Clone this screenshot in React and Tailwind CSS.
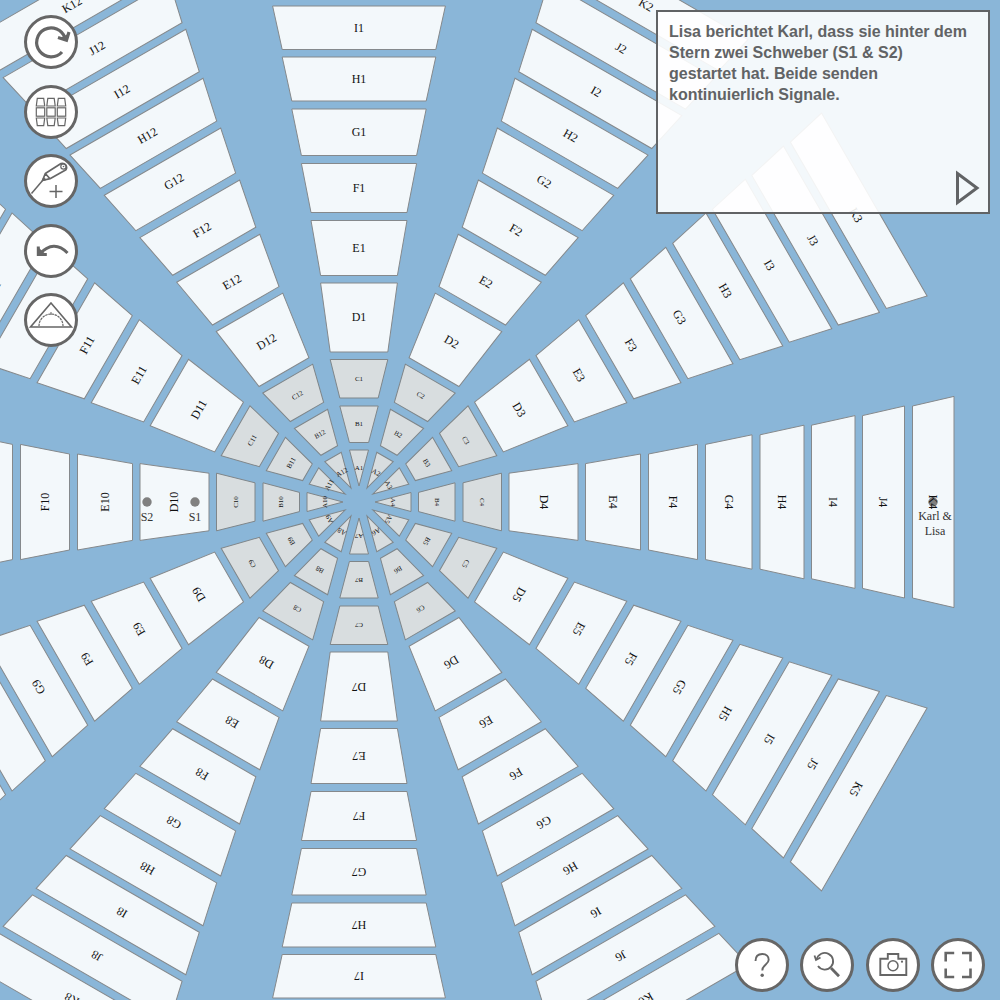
import React from "react";

const SIZE = 1000;
const CENTER = { x: 359, y: 502 };

// inner / outer distance from the star, half widths at both ends, label distance
const RINGS = [
  { name: "A", inner: 16, outer: 52, innerHalf: 0, outerHalf: 9.5, label: 34, near: true },
  { name: "B", inner: 59.5, outer: 96, innerHalf: 9.6, outerHalf: 19.2, label: 78, near: true },
  { name: "C", inner: 104, outer: 142.5, innerHalf: 19.2, outerHalf: 28.8, label: 123, near: true },
  { name: "D", inner: 150, outer: 219, innerHalf: 28.8, outerHalf: 38.4, label: 185 },
  { name: "E", inner: 226.5, outer: 281.5, innerHalf: 38.4, outerHalf: 48, label: 254 },
  { name: "F", inner: 289.5, outer: 338.5, innerHalf: 48, outerHalf: 57.6, label: 314 },
  { name: "G", inner: 346.5, outer: 393, innerHalf: 57.6, outerHalf: 67.2, label: 370 },
  { name: "H", inner: 401, outer: 445, innerHalf: 67.2, outerHalf: 76.8, label: 423 },
  { name: "I", inner: 452.5, outer: 496, innerHalf: 76.8, outerHalf: 86.4, label: 474 },
  { name: "J", inner: 503.5, outer: 545.5, innerHalf: 86.4, outerHalf: 96, label: 524 },
  { name: "K", inner: 553.5, outer: 595, innerHalf: 96, outerHalf: 105.6, label: 574 },
];

const SECTORS = Array.from({ length: 12 }, (_, i) => i + 1);

const DOTS = [
  { x: 147, labelX: 147, lines: ["S2"] },
  { x: 195, labelX: 195, lines: ["S1"] },
  { x: 933, labelX: 935, lines: ["Karl &", "Lisa"] },
];

function sectorTransform(number) {
  return `translate(${CENTER.x} ${CENTER.y}) rotate(${(number - 1) * 30})`;
}

// labels whose middle lies beyond the map's edge are left out
function isLabelOnMap(ring, number) {
  const angle = ((number - 1) * Math.PI) / 6;
  const x = CENTER.x + ring.label * Math.sin(angle);
  const y = CENTER.y - ring.label * Math.cos(angle);
  const margin = 9;
  return x > -margin && x < SIZE + margin && y > -margin && y < SIZE + margin;
}

function SectorFields({ number }) {
  return (
    <g transform={sectorTransform(number)}>
      {RINGS.map((r) => (
        <polygon
          key={r.name}
          points={`${-r.outerHalf},${-r.outer} ${r.outerHalf},${-r.outer} ${r.innerHalf},${-r.inner} ${-r.innerHalf},${-r.inner}`}
          className={r.near ? "fill-[#d8dddf] stroke-[#7f868a]" : "fill-[#f3f8fb] stroke-[#85898c]"}
        />
      ))}
    </g>
  );
}

function SectorLabels({ number }) {
  return (
    <g transform={sectorTransform(number)} textAnchor="middle" className="fill-[#111111]">
      {RINGS.filter((r) => isLabelOnMap(r, number)).map((r) => (
        <text key={r.name} y={-r.label} dy={r.near ? 2 : 4} className={r.near ? "text-[7px]" : "text-xs"}>
          {r.name + number}
        </text>
      ))}
    </g>
  );
}

function StarMap() {
  return (
    <svg
      viewBox="0 0 1000 1000"
      preserveAspectRatio="xMidYMid slice"
      className="block h-full w-full font-['Liberation_Serif',serif]"
      role="img"
      aria-label="Sternkarte"
    >
      {SECTORS.map((n) => (
        <SectorFields key={n} number={n} />
      ))}
      {DOTS.map((d) => (
        <g key={d.x}>
          <circle cx={d.x} cy="502" r="4.7" className="fill-[#808080]" />
          {d.lines.map((line, i) => (
            <text
              key={line}
              x={d.labelX}
              y={(d.lines.length > 1 ? 520 : 521) + i * 15}
              textAnchor="middle"
              className="fill-[#333333] text-xs"
            >
              {line}
            </text>
          ))}
        </g>
      ))}
      {SECTORS.map((n) => (
        <SectorLabels key={n} number={n} />
      ))}
    </svg>
  );
}

function RoundButton({ label, children }) {
  return (
    <button
      type="button"
      aria-label={label}
      className="flex size-[54px] shrink-0 items-center justify-center rounded-full border-[3px] border-[#666666] bg-white text-[#666666]"
    >
      <svg viewBox="-24 -24 48 48" className="size-12" fill="none" stroke="currentColor">
        {children}
      </svg>
    </button>
  );
}

const GRID_COLUMNS = [-10.5, 0, 10.5];

export default function App() {
  return (
    <main className="relative h-screen w-full overflow-hidden bg-[#8ab6d8]">
      <StarMap />

      <nav
        aria-label="Werkzeuge"
        className="absolute top-[15px] left-6 flex h-[332px] flex-col justify-between"
      >
        <RoundButton label="Drehen">
          <path d="M11 10 A14.500 14.500 0 1 1 14 -4" strokeWidth="3.200" />
          <path d="M7 -4.500 L15.500 -1.800 L18 -10" strokeWidth="3.200" />
          <path d="M9 -4 L15.500 -2 L17 -8 Z" fill="currentColor" stroke="none" />
        </RoundButton>
        <RoundButton label="Felder">
          {GRID_COLUMNS.map((x) => (
            <g key={x} strokeWidth="1.200">
              <path d={`M${x - 3.2} -13.700 h6.400 l1 7.700 h-8.400 z`} />
              <rect x={x - 4.2} y="-4.200" width="8.400" height="8.400" />
              <path d={`M${x - 4.2} 6 h8.400 l-1 7.700 h-6.400 z`} />
            </g>
          ))}
        </RoundButton>
        <RoundButton label="Zeichnen">
          <path d="M-19.500 12.500 L-8 -1" strokeWidth="1.500" />
          <path
            d="M-8.500 -0.500 L-5.700 -7.500 L10 -17.500 A4.300 4.300 0 0 1 15 -11.300 L-1 -2.300 Z M-5.700 -7.500 L-1 -2.300"
            strokeWidth="1.700"
            strokeLinejoin="round"
          />
          <path d="M-8.500 -0.500 L-7.400 -3.700 L-5 -1.300 Z" fill="currentColor" />
          <circle cx="12.500" cy="-14.500" r="2.700" strokeWidth="1.200" />
          <circle cx="12.500" cy="-14.500" r="0.800" fill="currentColor" stroke="none" />
          <path d="M5 4 v13 M-1.500 10.500 h13" strokeWidth="1.500" />
        </RoundButton>
        <RoundButton label="Zurück">
          <path d="M-11.500 3 Q3 -12 16.500 2" strokeWidth="3" />
          <path d="M-12.700 -4.500 v8 h8.500" strokeWidth="3" />
          <path d="M-12 -3 L-12 3 L-5.500 3 Z" fill="currentColor" stroke="none" />
        </RoundButton>
        <RoundButton label="Geodreieck">
          <path d="M0 -17 L20.500 7 H-20.500 Z" strokeWidth="1.600" />
          <path d="M-12 6 A12 12 0 0 1 12 6" strokeWidth="1.200" strokeDasharray="2.500 0.700" />
          <path d="M0 -8 v3" strokeWidth="1" />
        </RoundButton>
      </nav>

      <section
        aria-label="Hinweis"
        className="absolute top-[10px] right-[10px] flex min-h-[204px] w-[334px] flex-col justify-between border-2 border-[#616365] bg-white/90 pt-[9px] pr-2 pb-[6px] pl-[11px]"
      >
        <p className="pr-3 font-['Liberation_Sans',sans-serif] text-base leading-[21px] font-bold text-[#616365]">
          Lisa berichtet Karl, dass sie hinter dem Stern zwei Schweber (S1 &amp; S2) gestartet hat.
          Beide senden kontinuierlich Signale.
        </p>
        <button type="button" aria-label="Weiter" className="self-end text-[#616365]">
          <svg width="24" height="36" viewBox="0 0 24 36" fill="none" stroke="currentColor" strokeWidth="3">
            <path d="M1.500 3.500 L21 18 L1.500 32.500 Z" />
          </svg>
        </button>
      </section>

      <div
        role="toolbar"
        aria-label="Ansicht"
        className="absolute right-[15px] bottom-2 flex w-[250px] justify-between"
      >
        <RoundButton label="Hilfe">
          <path
            d="M-6.500 -4 C-6.500 -8.500 -4 -11 0.300 -11 C4.500 -11 6.700 -8.500 6.700 -5.300 C6.700 -0.500 0.300 -0.500 0.300 5.500"
            strokeWidth="1.900"
          />
          <circle cx="0.200" cy="10.300" r="1.700" fill="currentColor" stroke="none" />
        </RoundButton>
        <RoundButton label="Zoom zurücksetzen">
          <path d="M-10.300 -5.500 A8.300 8.300 0 1 1 -9 1" strokeWidth="1.800" />
          <path d="M-12.500 -9.500 L-11 -5 L-6.500 -7.500" strokeWidth="1.800" />
          <path d="M4 3 L12 11.300" strokeWidth="2.800" />
        </RoundButton>
        <RoundButton label="Foto">
          <path d="M-12.700 -6.300 h7.500 v-4.700 h10.500 v4.700 h8 v16.300 h-26 z" strokeWidth="1.900" />
          <circle cx="0" cy="0.700" r="5" strokeWidth="1.500" />
          <circle cx="9" cy="-3.300" r="1.100" fill="currentColor" stroke="none" />
        </RoundButton>
        <RoundButton label="Vollbild">
          <path
            d="M-12.300 -3.500 v-8.500 h8.500 M4 -12 h8.500 v8.500 M12.500 3.500 v8.500 h-8.500 M-3.800 12 h-8.500 v-8.500"
            strokeWidth="2.600"
          />
        </RoundButton>
      </div>
    </main>
  );
}
